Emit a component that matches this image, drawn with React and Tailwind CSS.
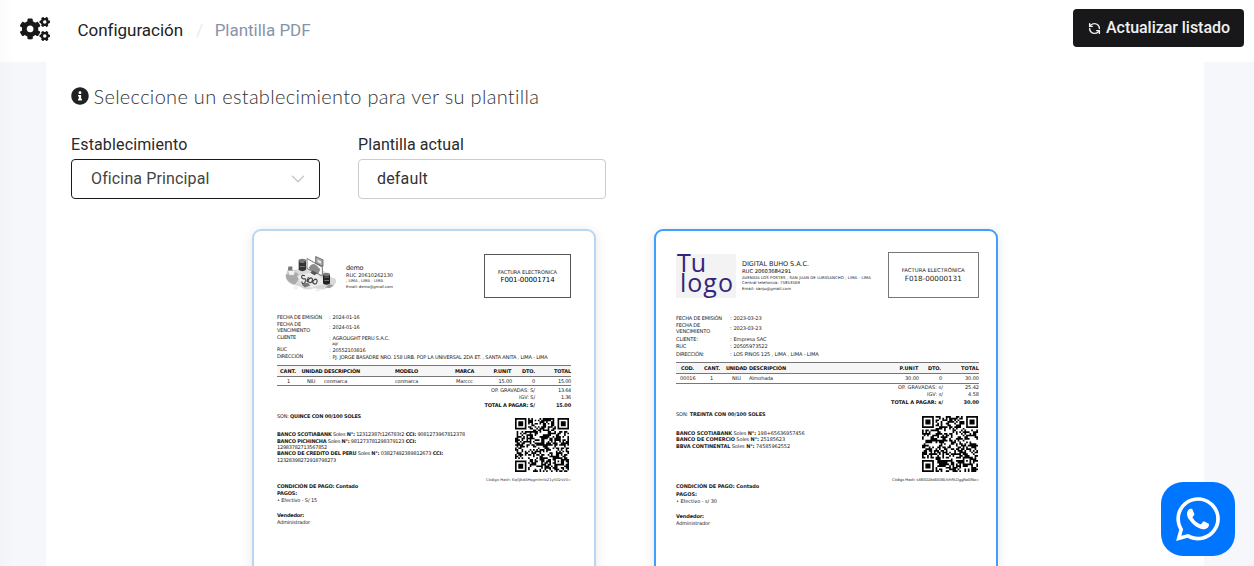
import { useLayoutEffect, useRef } from "react";
import { FaCogs, FaInfoCircle, FaWhatsapp } from "react-icons/fa";
import { RefreshCcw, ChevronDown } from "lucide-react";

/* Text tracked so that its line takes exactly `w` pixels. */
function Fit({ w, className = "", children }) {
  const ref = useRef(null);
  useLayoutEffect(() => {
    const el = ref.current;
    el.style.letterSpacing = "0px";
    const n = el.textContent.length;
    const natural = el.getBoundingClientRect().width;
    el.style.letterSpacing = `${(w - natural) / n}px`;
  }, [w]);
  return (
    <span ref={ref} className={`inline-block w-max whitespace-pre ${className}`}>
      {children}
    </span>
  );
}

function Qr({ seed, className }) {
  const n = 33;
  let s = seed;
  const rand = () => {
    s = (s * 1103515245 + 12345) % 2147483648;
    return s / 2147483648;
  };
  const finder = (x, y) => {
    const d = Math.max(Math.abs(x - 3), Math.abs(y - 3));
    return d === 3 || d <= 1;
  };
  let d = "";
  for (let y = 0; y < n; y++) {
    for (let x = 0; x < n; x++) {
      const r = rand() < 0.52;
      let on = r;
      if (x < 8 && y < 8) on = x < 7 && y < 7 && finder(x, y);
      else if (x > n - 9 && y < 8) on = x > n - 8 && y < 7 && finder(x - n + 7, y);
      else if (x < 8 && y > n - 9) on = x < 7 && y > n - 8 && finder(x, y - n + 7);
      else if (x > n - 10 && x < n - 4 && y > n - 10 && y < n - 4) {
        const q = Math.max(Math.abs(x - n + 7), Math.abs(y - n + 7));
        on = q !== 1;
      }
      if (on) d += `M${x} ${y}h1v1h-1z`;
    }
  }
  return (
    <svg viewBox="0 0 33 33" className={className}>
      <path d={d} fill="#050505" />
    </svg>
  );
}

function ShopArt() {
  return (
    <svg viewBox="0 0 156 110" className="h-[37px] w-[52px]">
      <path d="M2 62Q0 52 12 48L40 42Q60 28 84 38L118 48Q128 62 150 70Q160 84 140 94L112 104Q92 96 76 102Q60 106 44 94L20 88Q4 80 2 62z" fill="#d9d9d9" />
      <path d="M2 62Q8 50 34 52Q48 60 40 74L30 88Q4 82 2 62z" fill="#a9a9a9" />
      <path d="M36 62L90 50L122 84L80 98L50 88z" fill="#ececec" />
      <path d="M66 10L112 36V62L66 40z" fill="#fff" stroke="#777" strokeWidth="3" />
      <path d="M72 36q10-16 22-6l12 12-6 14-26-12z" fill="#8c8c8c" />
      <path d="M92 4l22 10v20l-22-10z" fill="#aaa" stroke="#444" strokeWidth="2" />
      <path d="M98 14l10 5v6l-10-5z" fill="#eee" />
      <path d="M41 16v28q11 8 22 0V16z" fill="#333" />
      <ellipse cx="52" cy="16" rx="11" ry="5" fill="#777" />
      <path d="M114 58v27q11 8 21 0V58z" fill="#222" />
      <ellipse cx="124.500" cy="58" rx="10.500" ry="5" fill="#777" />
      <path d="M44 22h14M44 34h16M118 66h14M118 76h14" stroke="#999" strokeWidth="2" />
      <path d="M10 34h12v10l6 8H8z" fill="#777" />
      <path d="M8 46h22l-2 14H12z" fill="#f2f2f2" stroke="#999" />
      <path d="M60 62q-10-4-10 3t8 6 2 10-10-2M70 66l-4 14M76 68q8 0 6 8t-8 6-4-8zM90 72q8 0 6 8t-8 6-4-8z" fill="none" stroke="#444" strokeWidth="3.500" />
      <path d="M82 46l16 8-10 6-12-7z" fill="#555" />
      <path d="M50 88l18-6 8 9-17 6z" fill="#777" />
      <path d="M120 96l14-9 12 4-12 8z" fill="#999" />
      <ellipse cx="32" cy="98" rx="5" ry="3" fill="#fff" stroke="#bbb" />
      <ellipse cx="98" cy="104" rx="6" ry="3" fill="#fff" stroke="#bbb" />
    </svg>
  );
}

function Field({ h, label, lw, value, vw, cols }) {
  return (
    <div className={`grid items-center ${cols} ${h}`}>
      <div className="leading-[6.500px]">
        {[].concat(label).map((t, i) => (
          <div key={t} className="h-[6.500px]">
            <Fit w={[].concat(lw)[i]}>{t}</Fit>
          </div>
        ))}
      </div>
      <span>:</span>
      <Fit w={vw}>{value}</Fit>
    </div>
  );
}

function InvoiceDemo() {
  const cols = "grid-cols-[52px_3.5px_1fr]";
  const table = "grid grid-cols-[22px_25px_71px_60px_34px_22px_24px_36px] items-center whitespace-nowrap";
  return (
    <div className="flex h-full flex-col pl-[23px] pr-[23px] pt-[23px] text-[5px] leading-[6px] text-[#222]">
      <div className="flex h-[44px]">
        <div className="ml-[8px] mt-px w-[61px]"><ShopArt /></div>
        <div className="mt-[10px] w-[138px]">
          <div className="h-[8px] text-[6.500px] leading-[8px]"><Fit w={17}>demo</Fit></div>
          <div className="h-[6px] text-[5px]"><Fit w={47}>RUC 20610262130</Fit></div>
          <div className="h-[5.500px] text-[3.800px] leading-[5.500px]"><Fit w={37}>, LIMA , LIMA - LIMA</Fit></div>
          <div className="h-[5.500px] text-[3.800px] leading-[5.500px]"><Fit w={47}>Email: demo@gmail.com</Fit></div>
        </div>
        <div className="flex h-[44px] w-[87px] flex-col items-center border border-[#555] pt-[14px]">
          <div className="h-[6px]"><Fit w={59}>FACTURA ELECTRÓNICA</Fit></div>
          <div className="mt-px h-[8px] text-[7px] leading-[8px] text-black"><Fit w={54}>F001-00001714</Fit></div>
        </div>
      </div>
      <div className="mt-[16px]">
        <Field cols={cols} h="h-[6px]" label="FECHA DE EMISIÓN" lw={45} value="2024-01-16" vw={27} />
        <Field cols={cols} h="h-[14px]" label={["FECHA DE", "VENCIMIENTO"]} lw={[24, 33]} value="2024-01-16" vw={27} />
        <Field cols={cols} h="h-[7px]" label="CLIENTE" lw={19} value="AGROLIGHT PERU S.A.C." vw={57} />
        <div className="h-[5px] pl-[55px] text-[4px] leading-[5px]"><Fit w={6}>agr</Fit></div>
        <Field cols={cols} h="h-[7px]" label="RUC" lw={10} value="20552103816" vw={33} />
        <Field cols={cols} h="h-[7px]" label="DIRECCIÓN" lw={26} value="PJ. JORGE BASADRE NRO. 158 URB. POP LA UNIVERSAL 2DA ET. , SANTA ANITA , LIMA - LIMA" vw={215} />
      </div>
      <div className="mt-[5px]">
        <div className={`${table} h-[12px] border-y border-[#777] bg-[#f6f6f6] font-bold text-[#111]`}>
          <Fit w={16} className="ml-[3px]">CANT.</Fit>
          <Fit w={21} className="ml-[2.500px]">UNIDAD</Fit>
          <Fit w={36}>DESCRIPCIÓN</Fit>
          <Fit w={23}>MODELO</Fit>
          <Fit w={19}>MARCA</Fit>
          <Fit w={18} className="ml-[4.500px]">P.UNIT</Fit>
          <Fit w={13} className="ml-[11px]">DTO.</Fit>
          <span className="text-right"><Fit w={17}>TOTAL</Fit></span>
        </div>
        <div className={`${table} h-[9px] border-b border-[#777]`}>
          <span className="pl-[10px]">1</span>
          <Fit w={8} className="ml-[8px]">NIU</Fit>
          <Fit w={23}>conmarca</Fit>
          <Fit w={23}>conmarca</Fit>
          <Fit w={17} className="ml-px">Marccc</Fit>
          <span className="-mr-[1px] text-right"><Fit w={13.500}>15.00</Fit></span>
          <span className="pl-[21px]">0</span>
          <span className="text-right"><Fit w={13}>15.00</Fit></span>
        </div>
      </div>
      <div className="grid grid-cols-[258px_36px] pt-px text-right leading-[7.300px]">
        <Fit w={44} className="ml-auto h-[7.300px]">OP. GRAVADAS: S/</Fit><span><Fit w={13}>13.64</Fit></span>
        <Fit w={16} className="ml-auto h-[7.300px]">IGV: S/</Fit><span><Fit w={10}>1.36</Fit></span>
        <Fit w={50.500} className="ml-auto h-[7.300px] font-bold text-[#111]">TOTAL A PAGAR: S/</Fit><span className="font-bold text-[#111]"><Fit w={15}>15.00</Fit></span>
      </div>
      <div className="flex justify-between">
        <div className="w-[200px] whitespace-nowrap pt-[4px] leading-[6.300px]">
          <div className="h-[6px]"><Fit w={84}>SON: <b>QUINCE CON 00/100 SOLES</b></Fit></div>
          <div className="mt-[12.500px] *:h-[6.300px]">
            <div><Fit w={188}><b>BANCO SCOTIABANK</b> Soles <b>N°:</b> 12312387t126783t2 <b>CCI:</b> 9081273967812378</Fit></div>
            <div><Fit w={139}><b>BANCO PICHINCHA</b> Soles <b>N°:</b> 981273781298379123 <b>CCI:</b></Fit></div>
            <div><Fit w={50}>12983782713567852</Fit></div>
            <div><Fit w={166}><b>BANCO DE CREDITO DEL PERU</b> Soles <b>N°:</b> 03827492389812673 <b>CCI:</b></Fit></div>
            <div><Fit w={59}>12328398272918798273</Fit></div>
          </div>
          <div className="mt-[20px] leading-[7px] *:h-[7.300px]">
            <div><Fit w={81} className="font-bold">CONDICIÓN DE PAGO: Contado</Fit></div>
            <div><Fit w={20} className="font-bold">PAGOS:</Fit></div>
            <div><Fit w={40}>• Efectivo - S/ 15</Fit></div>
            <div />
            <div><Fit w={27} className="font-bold">Vendedor:</Fit></div>
            <div><Fit w={33}>Administrador</Fit></div>
          </div>
        </div>
        <div className="-ml-[10px] flex flex-col items-end pt-[9px]">
          <Qr seed={7717} className="mr-[2px] h-[54px] w-[54px]" />
          <div className="mt-[5px] text-[3.800px] leading-[6px] text-[#444]"><Fit w={85}>Código Hash: KqSJkdAHqgmImlo21yS02sV4=</Fit></div>
        </div>
      </div>
    </div>
  );
}

function InvoiceBuho() {
  const cols = "grid-cols-[54px_3.5px_1fr]";
  const table = "grid grid-cols-[28px_22px_23px_148px_22px_24px_36px] items-center whitespace-nowrap";
  return (
    <div className="flex h-full flex-col pl-[20px] pr-[17px] pt-[20.500px] text-[5px] leading-[6px] text-[#222]">
      <div className="flex h-[46px]">
        <div className="mt-[2px] flex h-[44px] w-[60px] flex-col bg-[#f3f3f3] font-['Open_Sans',sans-serif] text-[25px] text-[#33247c]">
          <div className="-mt-[2px] h-[20px] pl-px leading-[20px]"><Fit w={29}>Tu</Fit></div>
          <div className="h-[20px] pl-[4px] leading-[20px]"><Fit w={54}>logo</Fit></div>
        </div>
        <div className="ml-[6px] mt-[8px] w-[145.500px]">
          <div className="h-[8px] text-[6.500px] leading-[8px]"><Fit w={67}>DIGITAL BUHO S.A.C.</Fit></div>
          <div className="h-[7px] text-[5.300px] leading-[7px] text-black"><Fit w={49}>RUC 20603684291</Fit></div>
          <div className="h-[5.500px] text-[3.900px] leading-[5.500px]"><Fit w={129}>AVENIDA LOS POSTES , SAN JUAN DE LURIGANCHO , LIMA - LIMA</Fit></div>
          <div className="h-[5.500px] text-[3.900px] leading-[5.500px]"><Fit w={58}>Central telefónica: 75853569</Fit></div>
          <div className="h-[5.500px] text-[3.900px] leading-[5.500px]"><Fit w={49}>Email: sanju@gmail.com</Fit></div>
        </div>
        <div className="flex h-[46px] w-[91.500px] shrink-0 flex-col items-center border border-[#777] pt-[14px]">
          <div className="h-[7px] text-[5.300px]"><Fit w={63}>FACTURA ELECTRÓNICA</Fit></div>
          <div className="mt-px h-[8px] text-[7.200px] leading-[8px]"><Fit w={57}>F018-00000131</Fit></div>
        </div>
      </div>
      <div className="mt-[17px] text-[5.100px]">
        <Field cols={cols} h="h-[6px]" label="FECHA DE EMISIÓN" lw={46} value="2023-03-23" vw={28} />
        <Field cols={cols} h="h-[15px]" label={["FECHA DE", "VENCIMIENTO"]} lw={[24, 34]} value="2023-03-23" vw={28} />
        <Field cols={cols} h="h-[7px]" label="CLIENTE:" lw={22} value="Empresa SAC" vw={33} />
        <Field cols={cols} h="h-[7.500px]" label="RUC" lw={10} value="20505973522" vw={34} />
        <Field cols={cols} h="h-[7.500px]" label="DIRECCIÓN:" lw={28} value="LOS PINOS 125 , LIMA , LIMA - LIMA" vw={85} />
      </div>
      <div className="mt-[4px]">
        <div className={`${table} h-[12.500px] border-y border-[#777] bg-[#f6f6f6] font-bold text-[#111]`}>
          <Fit w={13} className="ml-[5px]">COD.</Fit>
          <Fit w={16}>CANT.</Fit>
          <Fit w={21}>UNIDAD</Fit>
          <Fit w={37}>DESCRIPCIÓN</Fit>
          <Fit w={19} className="ml-[2.500px]">P.UNIT</Fit>
          <Fit w={13} className="ml-[9px]">DTO.</Fit>
          <span className="text-right"><Fit w={18}>TOTAL</Fit></span>
        </div>
        <div className={`${table} h-[9.500px] border-b border-[#777]`}>
          <Fit w={15.500} className="ml-[4px]">00016</Fit>
          <span className="pl-[6px]">1</span>
          <Fit w={9} className="ml-[6px]">NIU</Fit>
          <Fit w={24}>Almohada</Fit>
          <span className="text-right"><Fit w={14}>30.00</Fit></span>
          <span className="pl-[20px]">0</span>
          <span className="text-right"><Fit w={14}>30.00</Fit></span>
        </div>
      </div>
      <div className="grid grid-cols-[267px_36px] text-right leading-[7.600px]">
        <Fit w={45} className="ml-auto h-[7.600px]">OP. GRAVADAS: s/</Fit><span><Fit w={14}>25.42</Fit></span>
        <Fit w={16} className="ml-auto h-[7.600px]">IGV: s/</Fit><span><Fit w={11}>4.58</Fit></span>
        <Fit w={52} className="ml-auto h-[7.600px] font-bold text-[#111]">TOTAL A PAGAR: s/</Fit><span className="font-bold text-[#111]"><Fit w={15.500}>30.00</Fit></span>
      </div>
      <div className="flex justify-between">
        <div className="whitespace-nowrap pt-[4.500px] leading-[6.200px]">
          <div className="h-[6px]"><Fit w={89.500}>SON: <b>TREINTA CON 00/100 SOLES</b></Fit></div>
          <div className="mt-[13.500px] *:h-[6.200px]">
            <div><Fit w={128.500}><b>BANCO SCOTIABANK</b> Soles <b>N°:</b> 198+65636957456</Fit></div>
            <div><Fit w={109}><b>BANCO DE COMERCIO</b> Soles <b>N°:</b> 25185623</Fit></div>
            <div><Fit w={114}><b>BBVA CONTINENTAL</b> Soles <b>N°:</b> 74585962552</Fit></div>
          </div>
          <div className="mt-[34.500px] leading-[7px] *:h-[7.400px]">
            <div><Fit w={83} className="font-bold">CONDICIÓN DE PAGO: Contado</Fit></div>
            <div><Fit w={21} className="font-bold">PAGOS:</Fit></div>
            <div><Fit w={41}>• Efectivo - s/ 30</Fit></div>
            <div />
            <div><Fit w={28} className="font-bold">Vendedor:</Fit></div>
            <div><Fit w={34}>Administrador</Fit></div>
          </div>
        </div>
        <div className="flex flex-col items-end pt-[10px]">
          <Qr seed={42} className="mr-[1.500px] h-[56px] w-[56px]" />
          <div className="mt-[5px] text-[3.800px] leading-[6px] text-[#333]"><Fit w={87}>Código Hash: s3B5D28sBX0BLh/hRLOggRa0/No=</Fit></div>
        </div>
      </div>
    </div>
  );
}

export default function App() {
  return (
    <div className="relative flex h-screen w-full flex-col overflow-hidden bg-[#f6f7fa] font-[Roboto,sans-serif] text-[#212121]">
      <header className="flex h-[62px] shrink-0 items-start justify-between bg-white pl-[20px] pr-[10px] pt-[9px]">
        <div className="flex h-[42px] items-center text-[17px]">
          <FaCogs className="-mt-[3px] h-[24px] w-[30px] text-[#18181b]" />
          <Fit w={105} className="ml-[27.500px] mt-px text-[#222]">Configuración</Fit>
          <span className="mx-[13px] mt-px w-[5.500px] text-[#ebebeb]">/</span>
          <Fit w={96} className="mt-px text-[#8793a8]">Plantilla PDF</Fit>
        </div>
        <button className="flex h-[38px] w-[171px] items-center rounded-[4px] bg-[#18181a] pl-[15px] text-[16px] font-medium text-[#f0f0f0]">
          <RefreshCcw className="mr-[5px] h-[13px] w-[13px]" strokeWidth={2.6} />
          <Fit w={124}>Actualizar listado</Fit>
        </button>
      </header>
      <main className="mx-[46px] mr-[50px] flex-1 bg-white pl-[25px] pt-[22px]">
        <div className="flex h-[25px] items-center">
          <FaInfoCircle className="-mt-px mr-[4.500px] h-[18px] w-[18px] text-[#212121]" />
          <Fit w={446} className="font-[Lato,sans-serif] text-[20px] font-light leading-[25px] text-[#333]">Seleccione un establecimiento para ver su plantilla</Fit>
        </div>
        <div className="mt-[25px] flex gap-[38px] text-[16px] text-[#2a2a2a]">
          <div className="w-[249px]">
            <div className="h-[25px] leading-[21px]"><Fit w={116.500}>Establecimiento</Fit></div>
            <div className="flex h-[40px] items-center justify-between rounded-[4px] border border-[#1a1a1a] pl-[19px] pr-[10px]">
              <Fit w={118} className="text-[#444]">Oficina Principal</Fit>
              <ChevronDown className="h-[22px] w-[22px] text-[#c0c4cc]" strokeWidth={1.4} />
            </div>
          </div>
          <div className="w-[248px]">
            <div className="h-[25px] leading-[21px]"><Fit w={106}>Plantilla actual</Fit></div>
            <div className="flex h-[40px] items-center rounded-[4px] border border-[#ccc] pl-[18px] text-[#333]">
              <Fit w={51}>default</Fit>
            </div>
          </div>
        </div>
        <div className="ml-[181px] mt-[30px] flex gap-[58px] font-['DejaVu_Sans',sans-serif]">
          <div className="h-[480px] w-[344px] rounded-[9px] border-2 border-[#b9d7f3] bg-white shadow-[0_2px_12px_rgba(0,0,0,0.1)]">
            <InvoiceDemo />
          </div>
          <div className="h-[480px] w-[344px] rounded-[9px] border-2 border-[#409eff] bg-white shadow-[0_2px_12px_rgba(0,0,0,0.1)]">
            <InvoiceBuho />
          </div>
        </div>
      </main>
      <div className="pointer-events-none absolute inset-y-0 left-0 w-[14px] bg-gradient-to-r from-black/[0.015] to-transparent" />
      <a className="absolute bottom-[10px] right-[19px] flex h-[74px] w-[74px] items-center justify-center rounded-[22px] bg-[#0075ff]">
        <FaWhatsapp className="h-[50px] w-[50px] text-white" />
      </a>
    </div>
  );
}
